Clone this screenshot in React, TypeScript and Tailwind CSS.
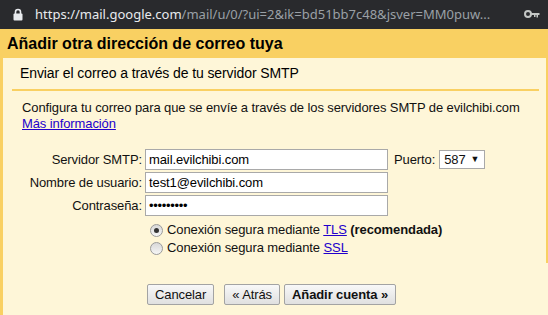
import { useState } from 'react'

function LockIcon() {
  return (
    <svg width="10" height="13" viewBox="0 0 10 13" className="shrink-0">
      <path d="M2.5 6V4a2.5 2.5 0 0 1 5 0v2" fill="none" stroke="#e8eaed" strokeWidth="1.6" />
      <rect x="0.5" y="5.5" width="9" height="7" rx="1" fill="#e8eaed" />
    </svg>
  )
}

function KeyIcon() {
  return (
    <svg width="16" height="9" viewBox="0 0 16 9" className="shrink-0">
      <circle cx="4" cy="4" r="3" fill="none" stroke="#c4c7c5" strokeWidth="2" />
      <path d="M7 3h8.5v2H14v2.5h-1.5V5h-1v2h-1.5V5H7z" fill="#c4c7c5" />
    </svg>
  )
}

function Radio({ checked }: { checked?: boolean }) {
  return (
    <span className="w-[13px] h-[13px] rounded-full border border-[#9a9a9a] bg-gradient-to-b from-[#d8d8d8] to-[#f6f6f6] flex items-center justify-center shrink-0">
      {checked && <span className="w-[5px] h-[5px] rounded-full bg-[#333]" />}
    </span>
  )
}

function Button({ children, bold }: { children: React.ReactNode; bold?: boolean }) {
  return (
    <button
      className={`h-[21px] px-[7px] border border-[#a3a3a3] rounded-[2px] bg-gradient-to-b from-[#f8f8f8] to-[#e0e0e0] text-[13px] text-[#111] leading-none ${bold ? 'font-bold' : ''}`}
    >
      {children}
    </button>
  )
}

const fields = [
  { label: 'Servidor SMTP:', value: 'mail.evilchibi.com' },
  { label: 'Nombre de usuario:', value: 'test1@evilchibi.com' },
  { label: 'Contraseña:', value: '•••••••••', password: true },
]

export default function App() {
  const [tls, setTls] = useState(true)

  return (
    <div className="w-[548px] h-[315px] overflow-hidden bg-[#fef6d8] font-['Liberation_Sans',Arial,sans-serif] text-[#111]">
      {/* Browser address bar */}
      <div className="h-[29px] bg-[#292a2d] flex items-center pl-[13px] pr-[8px]">
        <LockIcon />
        <div className="ml-[12px] font-['Noto_Sans',sans-serif] text-[13px] whitespace-nowrap flex-1 overflow-hidden">
          <span className="text-[#e8eaed]">https://mail.google.com</span>
          <span className="text-[#9aa0a6]">/mail/u/0/?ui=2&amp;ik=bd51bb7c48&amp;jsver=MM0puw...</span>
        </div>
        <KeyIcon />
      </div>

      {/* Dialog title */}
      <div className="h-[29px] bg-[#f9d062] pl-[7px] flex items-center text-[16px] font-bold text-black">
        Añadir otra dirección de correo tuya
      </div>

      <div className="border-l-[3px] border-[#f9d062] h-[257px] tracking-[-0.1px]">
        <div className="border-r-2 border-[#f9d062] pb-[6px]">
          <div className="h-[31px] pl-[17px] flex items-center text-[14px] text-black">
            Enviar el correo a través de tu servidor SMTP
          </div>
          <div className="h-[2px] bg-[#f9d062] ml-[9px] mr-[7px]" />

          <div className="mt-[9px] pl-[19px] text-[13px] leading-[16px]">
            <div>Configura tu correo para que se envíe a través de los servidores SMTP de evilchibi.com</div>
            <a href="#" className="text-[#2200cc] underline">Más información</a>
          </div>

          <div className="mt-[17px] flex flex-col gap-[2px]">
            {fields.map((f, i) => (
              <div key={f.label} className="flex items-center">
                <span className="w-[139px] text-right text-[13px]">{f.label}</span>
                <div className="ml-[3px] w-[243px] h-[21px] bg-white border border-[#a9a9a9] flex items-center pl-[3px] text-[13px] text-black">
                  {f.password ? <span className="text-[13px] tracking-[-0.3px]">{f.value}</span> : f.value}
                </div>
                {i === 0 && (
                  <>
                    <span className="ml-[6px] text-[13px]">Puerto:</span>
                    <div className="ml-[4px] w-[46px] h-[19px] bg-white border border-[#a9a9a9] flex items-center justify-between pl-[4px] pr-[5px] text-[13px]">
                      587 <span className="text-[9px]">▼</span>
                    </div>
                  </>
                )}
              </div>
            ))}
          </div>

          <div className="mt-[5px] pl-[147px] text-[13px]">
            <label className="h-[18px] flex items-center gap-[4px]" onClick={() => setTls(true)}>
              <Radio checked={tls} />
              <span>
                Conexión segura mediante <a href="#" className="text-[#2200cc] underline">TLS</a>{' '}
                <b>(recomendada)</b>
              </span>
            </label>
            <label className="h-[18px] flex items-center gap-[4px]" onClick={() => setTls(false)}>
              <Radio checked={!tls} />
              <span>
                Conexión segura mediante <a href="#" className="text-[#2200cc] underline">SSL</a>
              </span>
            </label>
          </div>
        </div>

        <div className="mt-[21px] pl-[144px] flex gap-[10px]">
          <Button>Cancelar</Button>
          <div className="flex gap-[4px]">
            <Button>« Atrás</Button>
            <Button bold>Añadir cuenta »</Button>
          </div>
        </div>
      </div>
    </div>
  )
}
